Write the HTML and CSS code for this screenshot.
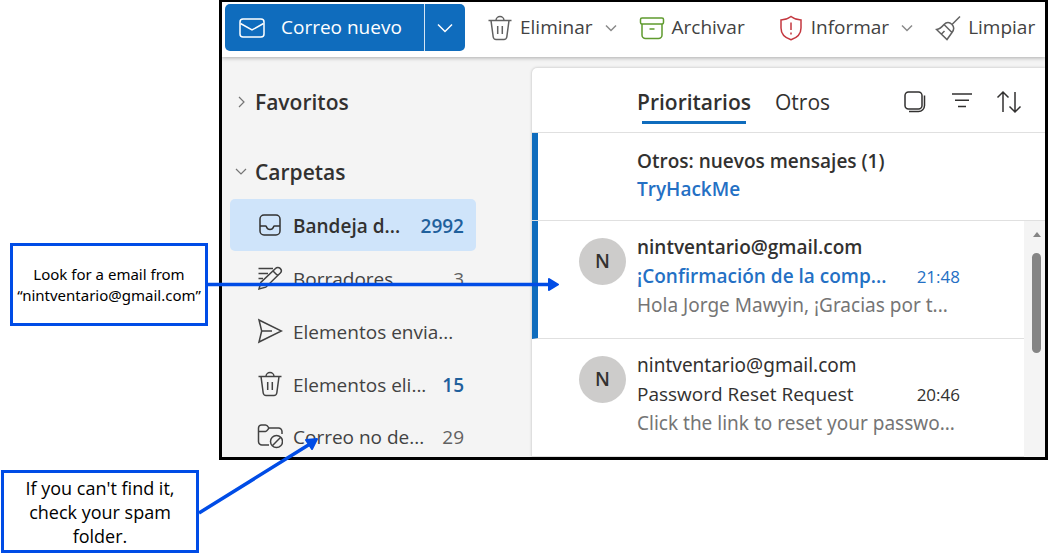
FILE: index.html
```html
<!DOCTYPE html>
<html lang="es">
<head>
<meta charset="utf-8">
<meta name="viewport" content="width=device-width, initial-scale=1">
<title>Correo</title>
<link rel="stylesheet" href="styles.css">
</head>
<body>
<div class="guide">
  <main class="mail">
    <header class="toolbar">
      <div class="split">
        <button class="new" type="button">
          <svg class="icon" viewBox="0 0 26 26"><rect x="1" y="4" width="24" height="18" rx="3"/><path d="M1.500 8.500l11.500 6.500 11.500-6.500"/></svg>
          <span>Correo nuevo</span>
        </button>
        <button class="new-more" type="button" aria-label="Más opciones"><svg class="chev-lg" viewBox="0 0 16 10"><path d="M1 1.500l7 7 7-7"/></svg></button>
      </div>
      <button class="tool tool-delete" type="button">
        <svg class="icon" viewBox="0 0 26 26"><path d="M1.500 5.500h23M9 5.500a4 4 0 0 1 8 0M4 5.500l2.200 16.500a3 3 0 0 0 3 2.500h7.600a3 3 0 0 0 3-2.500L22 5.500M10.700 11v8M15.300 11v8"/></svg>
        <span>Eliminar</span>
        <svg class="chev" viewBox="0 0 12 8"><path d="M1 1.500l5 5 5-5"/></svg>
      </button>
      <button class="tool tool-archive" type="button">
        <svg class="icon green" viewBox="0 0 26 26"><rect x="1.500" y="3" width="23" height="6" rx="1.500"/><path d="M3 9v11a3.500 3.500 0 0 0 3.500 3.500h13A3.500 3.500 0 0 0 23 20V9M10.500 14h5"/></svg>
        <span>Archivar</span>
      </button>
      <button class="tool tool-report" type="button">
        <svg class="icon red" viewBox="0 0 26 26"><path d="M13 1.500c3 2.300 6 3.400 10 3.500v8c0 6-4 9.800-10 11.800C7 22.800 3 19 3 13V5c4-.1 7-1.200 10-3.500zM13 7.500v7.500M13 17.500v2"/></svg>
        <span>Informar</span>
        <svg class="chev" viewBox="0 0 12 8"><path d="M1 1.500l5 5 5-5"/></svg>
      </button>
      <button class="tool tool-sweep" type="button">
        <svg class="icon" viewBox="0 0 26 26"><path d="M25 1.500L17 9.500M9 9.500c2.500-2.800 5.500-2.600 7.800-.3s2.500 5.300.2 8.300L12 24.500 1.500 14.500C5 14 7 12 9 9.500zM9 9.500l8 8M6.500 19l3-3"/></svg>
        <span>Limpiar</span>
      </button>
    </header>
    <div class="body">
      <nav class="side">
        <button class="group" type="button"><svg class="twist" viewBox="0 0 12 12"><path d="M4 1l5 5-5 5"/></svg><span>Favoritos</span></button>
        <button class="group" type="button"><svg class="twist" viewBox="0 0 12 12"><path d="M1 3l5 5 5-5"/></svg><span>Carpetas</span></button>
        <ul class="folders">
          <li><a class="folder selected" href="#inbox">
            <svg class="icon" viewBox="0 0 26 26"><rect x="3" y="3" width="20" height="20" rx="4"/><path d="M3 14h5.500c.5 0 .8.400 1 .9a3.700 3.700 0 0 0 7 0c.2-.5.5-.9 1-.9H23"/></svg>
            <span class="name">Bandeja d...</span><span class="count">2992</span></a></li>
          <li><a class="folder" href="#drafts">
            <svg class="icon" viewBox="0 0 26 26"><path d="M1.500 3.500H16M1.500 8.500H11M1.500 13.500H6M2 24l1.800-6.500L18.500 3.500a3.200 3.200 0 0 1 4.800 4.500L8.800 22.200zM16 6l4.800 4.800"/></svg>
            <span class="name">Borradores</span><span class="count plain">3</span></a></li>
          <li><a class="folder" href="#sent">
            <svg class="icon" viewBox="0 0 26 26"><path d="M2 2l22.500 11L2 24l2.700-11zM4.700 13H15"/></svg>
            <span class="name">Elementos envia...</span></a></li>
          <li><a class="folder" href="#deleted">
            <svg class="icon" viewBox="0 0 26 26"><path d="M1.500 5.500h23M9 5.500a4 4 0 0 1 8 0M4 5.500l2.200 16.500a3 3 0 0 0 3 2.500h7.600a3 3 0 0 0 3-2.500L22 5.500M10.700 11v8M15.300 11v8"/></svg>
            <span class="name">Elementos eli...</span><span class="count">15</span></a></li>
          <li><a class="folder" href="#junk">
            <svg class="icon" viewBox="0 0 26 26"><path d="M12 22H5a3.500 3.500 0 0 1-3.500-3.500V5A3 3 0 0 1 4.500 2h4c1.500 0 2 .8 3.500 3h9.500A3.500 3.500 0 0 1 25 8.500v2.500M1.500 8.500h7c1.500 0 2-1.500 3.500-3.500"/><circle cx="19.500" cy="18.500" r="6"/><path d="M15.300 22.700l8.400-8.400"/></svg>
            <span class="name">Correo no de...</span><span class="count plain">29</span></a></li>
        </ul>
      </nav>
      <section class="list">
        <div class="tabs">
          <button class="tab active" type="button">Prioritarios</button>
          <button class="tab" type="button">Otros</button>
          <div class="actions">
            <button type="button" aria-label="Seleccionar"><svg class="icon" viewBox="0 0 26 26"><rect x="3" y="3" width="17" height="17" rx="3.500"/><path d="M22.500 6.500v10a6 6 0 0 1-6 6H7"/></svg></button>
            <button type="button" aria-label="Filtrar"><svg class="icon" viewBox="0 0 26 26"><path d="M3 5h20M6 11.300h14M9 17.500h8"/></svg></button>
            <button type="button" aria-label="Ordenar"><svg class="icon" viewBox="0 0 26 26"><path d="M7 23V3M1.500 8.500L7 3l5.500 5.500M19 3v20M13.500 17.500L19 23l5.500-5.500"/></svg></button>
          </div>
        </div>
        <div class="others unread">
          <div class="strong">Otros: nuevos mensajes (1)</div>
          <a class="link" href="#others">TryHackMe</a>
        </div>
        <div class="messages">
          <div class="items">
            <article class="message unread">
              <div class="avatar">N</div>
              <div class="text">
                <div class="strong">nintventario@gmail.com</div>
                <div class="subject link"><span>¡Confirmación de la comp...</span><time>21:48</time></div>
                <div class="preview">Hola Jorge Mawyin, ¡Gracias por t...</div>
              </div>
            </article>
            <article class="message">
              <div class="avatar">N</div>
              <div class="text">
                <div class="sender">nintventario@gmail.com</div>
                <div class="subject"><span>Password Reset Request</span><time>20:46</time></div>
                <div class="preview">Click the link to reset your passwo...</div>
              </div>
            </article>
          </div>
          <div class="scroll"><span class="up"></span><span class="thumb"></span></div>
        </div>
      </section>
    </div>
  </main>
  <aside class="note note-sender">Look for a email from “nintventario@gmail.com”</aside>
  <aside class="note note-spam">If you can't find it, check your spam folder.</aside>
  <svg class="arrows" width="1052" height="555" viewBox="0 0 1052 555">
    <path d="M206 284.500H550M199 513L310 444"/>
    <path class="head" d="M549 279l9 5.500-9 5.500zM306 440l11-1-5 10z"/>
  </svg>
</div>
</body>
</html>
```
FILE: styles.css
```css
* { box-sizing: border-box; }
body {
  margin: 0;
  background: #fff;
  color: #323130;
  font: 19px/29px "Open Sans", "Noto Sans", sans-serif;
}
button {
  font: inherit;
  color: inherit;
  background: none;
  border: 0;
  padding: 0;
  margin: 0;
}
a { color: inherit; text-decoration: none; }
svg { fill: none; stroke: currentColor; stroke-width: 1.5; flex: none; }
.icon { width: 26px; height: 26px; display: block; }

.guide { position: relative; padding: 0 4px 95px 219px; }
.mail {
  border: 3px solid #000;
  border-top-width: 2px;
  background: #f4f4f4;
  overflow: hidden;
}

.toolbar {
  display: flex;
  align-items: center;
  height: 55px;
  padding: 0 3px 4px;
  background: #fff;
  box-shadow: 0 1px 4px rgba(0, 0, 0, .3);
  white-space: nowrap;
}
.split {
  display: flex;
  flex: none;
  width: 240px;
  height: 47px;
  border-radius: 5px;
  background: #0f6cbd;
  color: #fff;
}
.new { flex: 1; display: flex; align-items: center; gap: 16px; padding-left: 14px; font-weight: 500; }
.new-more { width: 41px; border-left: 1px solid #d5e5f4; display: grid; place-items: center; }
.chev-lg { width: 16px; height: 10px; }
.tool { display: flex; align-items: center; gap: 7px; color: #424242; }
.tool .icon { color: #616161; }
.tool .green { color: #5f9b2e; }
.tool .red { color: #c4373f; }
.chev { width: 12px; height: 8px; margin-left: 5px; color: #8a8a8a; }
.tool-delete, .tool-archive, .tool-sweep { margin-left: 22px; }
.tool-report { margin-left: 33px; }

.body { display: grid; grid-template-columns: 310px 1fr; }
.side { padding: 20px 56px 0 8px; }
.group { display: flex; align-items: center; gap: 8px; height: 50px; padding-left: 5px; margin-bottom: 20px; font-size: 21px; font-weight: 600; }
.group + .group { margin-bottom: 2px; }
.twist { width: 12px; height: 12px; color: #757575; stroke-width: 1.2; }
.folders { list-style: none; margin: 0; padding: 0; display: grid; gap: 1px; }
.folder { display: flex; align-items: center; gap: 10px; height: 52px; padding: 0 12px 0 27px; border-radius: 5px; white-space: nowrap; color: #424242; }
.folders li:last-child .folder { height: 46px; padding-top: 4px; }
.name { flex: 1; }
.name, .count { padding-top: 2px; }
.count { color: #1f609c; font-weight: 600; }
.plain { color: #616161; font-weight: 400; }
.selected { background: #cfe4fa; color: #323130; font-weight: 600; }

.list { margin-top: 11px; background: #fff; border-radius: 5px 0 0 0; box-shadow: 0 0 3px rgba(0, 0, 0, .25); }
.tabs { display: flex; align-items: center; gap: 24px; height: 65px; padding: 4px 23px 0 105px; font-size: 21px; border-bottom: 1px solid #e0e0e0; }
.tab { height: 44px; padding-top: 4px; border-bottom: 3px solid transparent; }
.active { font-weight: 600; border-image: linear-gradient(90deg, transparent 8px, #0f6cbd 8px, #0f6cbd calc(100% - 8px), transparent calc(100% - 8px)) 3; }
.actions { display: flex; gap: 21px; margin-left: auto; }
.unread { border-left: 6px solid #0f6cbd; }
.others { height: 87px; padding: 14px 0 0 99px; line-height: 28px; }
.others .link { display: block; }
.strong { font-weight: 600; }
.link { color: #2470c4; font-weight: 600; }
.messages { display: flex; border-top: 1px solid #e0e0e0; }
.items { flex: 1; }
.message { display: flex; gap: 11px; height: 118px; padding: 12px 64px 0 47px; border-bottom: 1px solid #e0e0e0; }
.message.unread { padding-left: 41px; }
.avatar { flex: none; width: 47px; height: 47px; margin-top: 5px; border-radius: 50%; background: #cdcccb; display: grid; place-items: center; font-weight: 600; }
.text { flex: 1; white-space: nowrap; }
.subject { display: flex; justify-content: space-between; }
.subject time { font-size: 17px; font-weight: 400; }
.link time { font-weight: 500; }
.preview { color: #757575; }
.sender, .preview { font-family: "Noto Sans", "Open Sans", sans-serif; }
.scroll { width: 21px; background: #f4f4f4; display: flex; flex-direction: column; align-items: center; gap: 16px; padding: 11px 0 0 4px; }
.up { border: 4px solid transparent; border-top: 0; border-bottom: 5px solid #858585; }
.thumb { width: 9px; height: 100px; border-radius: 5px; background: #858585; }

.note {
  position: absolute;
  display: grid;
  place-items: center;
  width: 198px;
  height: 83px;
  border: 3px solid #004ce6;
  background: #fff;
  color: #000;
  text-align: center;
}
.note-sender { left: 10px; top: 243px; font: 15px/21px "Noto Sans", "Open Sans", sans-serif; }
.note-spam { left: 1px; top: 470px; padding: 0 18px; font-size: 18px; line-height: 24px; }
.arrows { position: absolute; left: 0; top: 0; color: #004ce6; stroke-width: 3.500; pointer-events: none; }
.arrows .head { fill: currentColor; stroke-width: 2; stroke-linejoin: round; }
```
